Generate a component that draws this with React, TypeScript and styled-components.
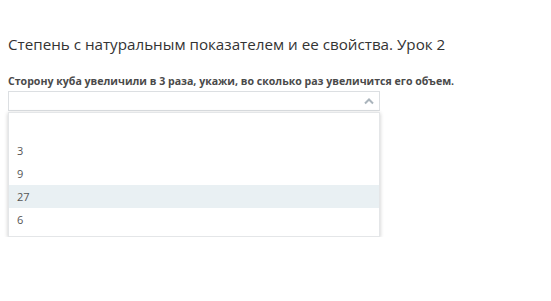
import React from "react";
import styled, { createGlobalStyle } from "styled-components";

const Global = createGlobalStyle`
  html, body { margin: 0; padding: 0; background: #fff; }
  body { font-family: "Open Sans", "Noto Sans", sans-serif; }
`;

const Page = styled.div`
  padding: 34px 8px 0 8px;
  display: flex;
  flex-direction: column;
  width: 372px;
`;

const Title = styled.h1`
  margin: 0;
  font-size: 15.2px;
  font-weight: 400;
  color: #333;
  line-height: 20px;
  white-space: nowrap;
`;

const Question = styled.div`
  margin-top: 20px;
  font-size: 10.6px;
  font-weight: 700;
  color: #4a4a4a;
  line-height: 14px;
  white-space: nowrap;
`;

const SelectWrap = styled.div`
  position: relative;
  margin-top: 3px;
`;

const SelectBox = styled.div`
  height: 18px;
  border: 1px solid #dcdfe2;
  display: flex;
  align-items: center;
  justify-content: flex-end;
  padding-right: 4px;
  background: #fff;
`;

const Menu = styled.ul`
  list-style: none;
  margin: 1px 0 0 0;
  padding: 3px 0 5px 0;
  background: #fff;
  border: 1px solid #e4e6e8;
  box-shadow: 0 1px 4px rgba(0, 0, 0, 0.22);
`;

const Option = styled.li<{ $active?: boolean }>`
  height: 23px;
  line-height: 23px;
  padding-left: 8px;
  font-size: 11px;
  color: #555;
  background: ${(p) => (p.$active ? "#e9f0f3" : "#fff")};
`;

export default function App() {
  const options = ["", "3", "9", "27", "6"];
  return (
    <>
      <Global />
      <Page>
        <Title>Степень с натуральным показателем и ее свойства. Урок 2</Title>
        <Question>
          Сторону куба увеличили в 3 раза, укажи, во сколько раз увеличится его объем.
        </Question>
        <SelectWrap>
          <SelectBox>
            <svg width="12" height="8" viewBox="0 0 12 8">
              <path d="M2 6.5 L6 2.5 L10 6.5" fill="none" stroke="#aab4bc" strokeWidth="2" />
            </svg>
          </SelectBox>
          <Menu>
            {options.map((o, i) => (
              <Option key={i} $active={o === "27"}>
                {o || "\u00a0"}
              </Option>
            ))}
          </Menu>
        </SelectWrap>
      </Page>
    </>
  );
}
